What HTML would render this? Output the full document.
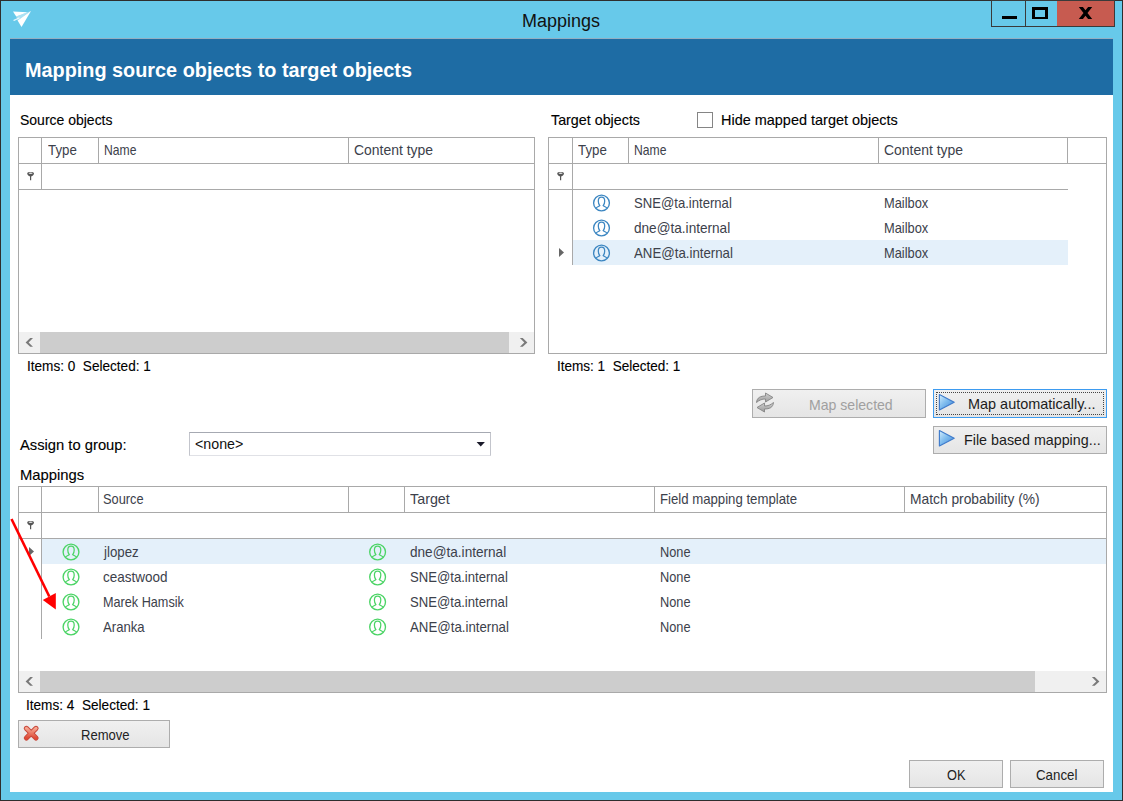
<!DOCTYPE html>
<html><head><meta charset="utf-8"><title>Mappings</title>
<style>
html,body{margin:0;padding:0;width:1123px;height:801px;overflow:hidden;background:#2E2E2E}
body{position:relative;font-family:"Liberation Sans",sans-serif}
.t{position:absolute;white-space:pre;line-height:20px;transform-origin:0 0}
svg{overflow:visible}
</style></head><body>
<div style="position:absolute;left:0px;top:0px;width:1123px;height:801px;background:#2E2E2E"></div>
<div style="position:absolute;left:1px;top:1px;width:1121px;height:799px;background:#67C9EA"></div>
<div style="position:absolute;left:10px;top:38px;width:1103px;height:754px;background:#FFFFFF"></div>
<div style="position:absolute;left:10px;top:38px;width:1103px;height:1px;background:#93AFC3"></div>
<div style="position:absolute;left:10px;top:39px;width:1103px;height:56px;background:#1E6CA4"></div>
<svg style="position:absolute;left:0;top:0" width="60" height="40"><polygon points="13,11.5 27.5,12.2 16.2,16.6" fill="#fff"/><polygon points="17.6,20.4 31,11 21.5,27" fill="#fff"/><polygon points="16.2,16.6 27.5,12.2 31,11 17.6,20.4" fill="#fff" fill-opacity="0.45"/><line x1="14" y1="20.3" x2="19" y2="18" stroke="#fff" stroke-opacity="0.8" stroke-width="1.3" stroke-linecap="round"/></svg>
<div class="t" style="left:522.00px;top:11px;font-size:18px;color:#111;transform:scaleX(0.9994);">Mappings</div>
<div style="position:absolute;left:991px;top:0px;width:124px;height:27px;background:#3A3A3A"></div>
<div style="position:absolute;left:992px;top:1px;width:33px;height:25px;background:#67C9EA"></div>
<div style="position:absolute;left:1026px;top:1px;width:31px;height:25px;background:#67C9EA"></div>
<div style="position:absolute;left:1057px;top:1px;width:57px;height:25px;background:#C75B50"></div>
<div style="position:absolute;left:1002px;top:16px;width:15px;height:3px;background:#000"></div>
<div style="position:absolute;left:1032px;top:7px;width:16px;height:12px;border:3px solid #000;border-left-width:3px;box-sizing:border-box;border-bottom-width:2px;border-right-width:3px"></div>
<svg style="position:absolute;left:1075px;top:4px" width="22" height="18"><polygon points="3.8,3 7.9,3 10.5,6.2 13.1,3 17.2,3 12.5,9 17.2,15 13.1,15 10.5,11.8 7.9,15 3.8,15 8.5,9" fill="#000"/></svg>
<div class="t" style="left:25.00px;top:60px;font-size:20px;font-weight:bold;color:#FFFFFF;transform:scaleX(0.9922);">Mapping source objects to target objects</div>
<div class="t" style="left:20.40px;top:110px;font-size:14.5px;color:#000;transform:scaleX(0.9644);-webkit-text-stroke:0.12px #000;">Source objects</div>
<div style="position:absolute;left:18px;top:137px;width:517px;height:217px;border:1px solid #A9A9A9;box-sizing:border-box;background:#fff"></div>
<div style="position:absolute;left:19px;top:163px;width:515px;height:1px;background:#A9A9A9"></div>
<div style="position:absolute;left:19px;top:189px;width:515px;height:1px;background:#A9A9A9"></div>
<div style="position:absolute;left:41px;top:138px;width:1px;height:51px;background:#A9A9A9"></div>
<div style="position:absolute;left:98px;top:138px;width:1px;height:25px;background:#A9A9A9"></div>
<div style="position:absolute;left:348px;top:138px;width:1px;height:25px;background:#A9A9A9"></div>
<div class="t" style="left:47.50px;top:140px;font-size:14.5px;color:#3C414B;transform:scaleX(0.9161);">Type</div>
<div class="t" style="left:103.80px;top:140px;font-size:14.5px;color:#3C414B;transform:scaleX(0.8375);">Name</div>
<div class="t" style="left:353.60px;top:140px;font-size:14.5px;color:#3C414B;transform:scaleX(0.9609);">Content type</div>
<svg style="position:absolute;left:26px;top:171px" width="10" height="11"><path d="M1.2,2.5 C1.2,0.6 8,0.6 8,2.5 C8,4 6.2,5 5.2,5.6 L5.2,9.2 L4,9.2 L4,5.6 C3,5 1.2,4 1.2,2.5 Z" fill="#555"/><ellipse cx="4.6" cy="2.2" rx="2" ry="0.8" fill="#E0E0E0"/></svg>
<div style="position:absolute;left:19px;top:332px;width:515px;height:21px;background:#F0F0F0"></div>
<div style="position:absolute;left:40px;top:332px;width:469px;height:21px;background:#CDCDCD"></div>
<svg style="position:absolute;left:25px;top:338px" width="10" height="10"><polygon points="8,0 5.2,0 0.6,4.4 5.2,8.8 8,8.8 3.6,4.4" fill="#7A7A7A"/></svg>
<svg style="position:absolute;left:518px;top:338px" width="10" height="10"><polygon points="1.9,0 4.7,0 9.4,4.4 4.7,8.8 1.9,8.8 6.3,4.4" fill="#7A7A7A"/></svg>
<div class="t" style="left:26.70px;top:356px;font-size:14.5px;color:#000;transform:scaleX(0.9366);-webkit-text-stroke:0.12px #000;">Items: 0  Selected: 1</div>
<div class="t" style="left:551.40px;top:110px;font-size:14.5px;color:#000;transform:scaleX(0.9859);-webkit-text-stroke:0.12px #000;">Target objects</div>
<div style="position:absolute;left:697px;top:112px;width:16px;height:16px;border:1px solid #858585;box-sizing:border-box;background:#fff"></div>
<div class="t" style="left:721.40px;top:110px;font-size:14.5px;color:#000;transform:scaleX(0.9970);-webkit-text-stroke:0.12px #000;">Hide mapped target objects</div>
<div style="position:absolute;left:548px;top:137px;width:559px;height:217px;border:1px solid #A9A9A9;box-sizing:border-box;background:#fff"></div>
<div style="position:absolute;left:549px;top:163px;width:557px;height:1px;background:#A9A9A9"></div>
<div style="position:absolute;left:549px;top:189px;width:519px;height:1px;background:#A9A9A9"></div>
<div style="position:absolute;left:572px;top:138px;width:1px;height:127px;background:#A9A9A9"></div>
<div style="position:absolute;left:628px;top:138px;width:1px;height:25px;background:#A9A9A9"></div>
<div style="position:absolute;left:878px;top:138px;width:1px;height:25px;background:#A9A9A9"></div>
<div style="position:absolute;left:1067px;top:138px;width:1px;height:25px;background:#A9A9A9"></div>
<div class="t" style="left:577.60px;top:140px;font-size:14.5px;color:#3C414B;transform:scaleX(0.9161);">Type</div>
<div class="t" style="left:633.80px;top:140px;font-size:14.5px;color:#3C414B;transform:scaleX(0.8375);">Name</div>
<div class="t" style="left:883.60px;top:140px;font-size:14.5px;color:#3C414B;transform:scaleX(0.9609);">Content type</div>
<svg style="position:absolute;left:556px;top:171px" width="10" height="11"><path d="M1.2,2.5 C1.2,0.6 8,0.6 8,2.5 C8,4 6.2,5 5.2,5.6 L5.2,9.2 L4,9.2 L4,5.6 C3,5 1.2,4 1.2,2.5 Z" fill="#555"/><ellipse cx="4.6" cy="2.2" rx="2" ry="0.8" fill="#E0E0E0"/></svg>
<div style="position:absolute;left:573px;top:240px;width:495px;height:25px;background:#E4F0FA"></div>
<svg style="position:absolute;left:558px;top:247px" width="8" height="12"><polygon points="1,1 6,5.5 1,10" fill="#666"/></svg>
<svg style="position:absolute;left:592px;top:194px" width="18" height="18"><g transform="translate(0.50,0.00)"><circle cx="9" cy="9" r="7.9" fill="none" stroke="#3D87C2" stroke-width="1.35"/><path d="M3.4,14.2 C4.6,12.8 6.6,12.4 7.3,11.6 C6.3,10.6 5.8,9.2 5.8,7.0 C5.8,4.7 7.2,3.2 9,3.2 C10.8,3.2 12.2,4.7 12.2,7.0 C12.2,9.2 11.7,10.6 10.7,11.6 C11.4,12.4 13.4,12.8 14.6,14.2" fill="none" stroke="#3D87C2" stroke-width="1.25"/></g></svg>
<div class="t" style="left:634.10px;top:193px;font-size:14.5px;color:#3C414B;transform:scaleX(0.9038);">SNE@ta.internal</div>
<div class="t" style="left:883.90px;top:193px;font-size:14.5px;color:#3C414B;transform:scaleX(0.8866);">Mailbox</div>
<svg style="position:absolute;left:592px;top:219px" width="18" height="18"><g transform="translate(0.50,0.00)"><circle cx="9" cy="9" r="7.9" fill="none" stroke="#3D87C2" stroke-width="1.35"/><path d="M3.4,14.2 C4.6,12.8 6.6,12.4 7.3,11.6 C6.3,10.6 5.8,9.2 5.8,7.0 C5.8,4.7 7.2,3.2 9,3.2 C10.8,3.2 12.2,4.7 12.2,7.0 C12.2,9.2 11.7,10.6 10.7,11.6 C11.4,12.4 13.4,12.8 14.6,14.2" fill="none" stroke="#3D87C2" stroke-width="1.25"/></g></svg>
<div class="t" style="left:634.10px;top:218px;font-size:14.5px;color:#3C414B;transform:scaleX(0.9377);">dne@ta.internal</div>
<div class="t" style="left:883.90px;top:218px;font-size:14.5px;color:#3C414B;transform:scaleX(0.8866);">Mailbox</div>
<svg style="position:absolute;left:592px;top:244px" width="18" height="18"><g transform="translate(0.50,0.00)"><circle cx="9" cy="9" r="7.9" fill="none" stroke="#3D87C2" stroke-width="1.35"/><path d="M3.4,14.2 C4.6,12.8 6.6,12.4 7.3,11.6 C6.3,10.6 5.8,9.2 5.8,7.0 C5.8,4.7 7.2,3.2 9,3.2 C10.8,3.2 12.2,4.7 12.2,7.0 C12.2,9.2 11.7,10.6 10.7,11.6 C11.4,12.4 13.4,12.8 14.6,14.2" fill="none" stroke="#3D87C2" stroke-width="1.25"/></g></svg>
<div class="t" style="left:634.10px;top:243px;font-size:14.5px;color:#3C414B;transform:scaleX(0.9139);">ANE@ta.internal</div>
<div class="t" style="left:883.90px;top:243px;font-size:14.5px;color:#3C414B;transform:scaleX(0.8866);">Mailbox</div>
<div class="t" style="left:557.20px;top:356px;font-size:14.5px;color:#000;transform:scaleX(0.9336);-webkit-text-stroke:0.12px #000;">Items: 1  Selected: 1</div>
<div style="position:absolute;left:752px;top:389px;width:174px;height:29px;border:1px solid #ADADAD;box-sizing:border-box;background:linear-gradient(#F0F0F0,#E5E5E5)"></div>
<svg style="position:absolute;left:750px;top:388px" width="30" height="30"><defs><linearGradient id="rg" x1="0" y1="0" x2="0" y2="1"><stop offset="0" stop-color="#D0D0D0"/><stop offset="1" stop-color="#9A9A9A"/></linearGradient></defs>
<path d="M6.5,14.5 C7,9.5 10.5,8 15.5,8 L15.5,5 L23,9.5 L15.5,14 L15.5,11 C12,11 9.5,12 6.5,14.5 Z" fill="url(#rg)" stroke="#858585" stroke-width="0.9" stroke-linejoin="round"/>
<path d="M23.5,14.5 C23,19.5 19.5,21 14.5,21 L14.5,24 L7,19.5 L14.5,15 L14.5,18 C18,18 20.5,17 23.5,14.5 Z" fill="url(#rg)" stroke="#858585" stroke-width="0.9" stroke-linejoin="round"/></svg>
<div class="t" style="left:808.60px;top:395px;font-size:14.5px;color:#A0A0A0;transform:scaleX(0.9705);">Map selected</div>
<div style="position:absolute;left:933px;top:389px;width:174px;height:29px;border:1px solid #3D9BF0;box-sizing:border-box;background:linear-gradient(#F0F0F0,#E5E5E5)"></div>
<div style="position:absolute;left:936px;top:392px;width:168px;height:23px;border:1px dotted #444;box-sizing:border-box"></div>
<svg style="position:absolute;left:937px;top:393px" width="20" height="20"><defs><linearGradient id="pg1" x1="0" y1="0" x2="1" y2="1"><stop offset="0" stop-color="#D4EEFD"/><stop offset="0.45" stop-color="#80BDEE"/><stop offset="1" stop-color="#3E85D8"/></linearGradient></defs><polygon points="2.4,1.6 17.2,9.3 2.4,17" fill="url(#pg1)" stroke="#3F7BCB" stroke-width="1.15" stroke-linejoin="round"/></svg>
<div class="t" style="left:967.50px;top:394px;font-size:14.5px;color:#1C1C1C;transform:scaleX(0.9964);">Map automatically...</div>
<div style="position:absolute;left:933px;top:426px;width:174px;height:28px;border:1px solid #ADADAD;box-sizing:border-box;background:linear-gradient(#F0F0F0,#E5E5E5)"></div>
<svg style="position:absolute;left:937px;top:429px" width="20" height="20"><defs><linearGradient id="pg2" x1="0" y1="0" x2="1" y2="1"><stop offset="0" stop-color="#D4EEFD"/><stop offset="0.45" stop-color="#80BDEE"/><stop offset="1" stop-color="#3E85D8"/></linearGradient></defs><polygon points="2.4,1.6 17.2,9.3 2.4,17" fill="url(#pg2)" stroke="#3F7BCB" stroke-width="1.15" stroke-linejoin="round"/></svg>
<div class="t" style="left:963.60px;top:430px;font-size:14.5px;color:#1C1C1C;transform:scaleX(0.9853);">File based mapping...</div>
<div class="t" style="left:20.10px;top:435px;font-size:14.5px;color:#000;transform:scaleX(1.0173);-webkit-text-stroke:0.12px #000;">Assign to group:</div>
<div style="position:absolute;left:189px;top:432px;width:302px;height:24px;border:1px solid #C3C5CC;border-top-color:#A6A9B2;border-bottom-color:#E0E1E6;box-sizing:border-box;background:#fff"></div>
<div class="t" style="left:194.70px;top:434px;font-size:14.5px;color:#111;transform:scaleX(0.9817);">&lt;none&gt;</div>
<svg style="position:absolute;left:476px;top:441px" width="10" height="7"><polygon points="0.6,1 8.9,1 4.75,5.6" fill="#1A1A2A"/></svg>
<div class="t" style="left:20.30px;top:465px;font-size:14.5px;color:#000;transform:scaleX(1.0211);-webkit-text-stroke:0.12px #000;">Mappings</div>
<div style="position:absolute;left:18px;top:486px;width:1089px;height:207px;border:1px solid #A9A9A9;box-sizing:border-box;background:#fff"></div>
<div style="position:absolute;left:19px;top:512px;width:1087px;height:1px;background:#A9A9A9"></div>
<div style="position:absolute;left:19px;top:538px;width:1087px;height:1px;background:#A9A9A9"></div>
<div style="position:absolute;left:41px;top:487px;width:1px;height:152px;background:#A9A9A9"></div>
<div style="position:absolute;left:98px;top:487px;width:1px;height:25px;background:#A9A9A9"></div>
<div style="position:absolute;left:348px;top:487px;width:1px;height:25px;background:#A9A9A9"></div>
<div style="position:absolute;left:404px;top:487px;width:1px;height:25px;background:#A9A9A9"></div>
<div style="position:absolute;left:654px;top:487px;width:1px;height:25px;background:#A9A9A9"></div>
<div style="position:absolute;left:904px;top:487px;width:1px;height:25px;background:#A9A9A9"></div>
<div class="t" style="left:103.30px;top:489px;font-size:14.5px;color:#3C414B;transform:scaleX(0.8838);">Source</div>
<div class="t" style="left:410.10px;top:489px;font-size:14.5px;color:#3C414B;transform:scaleX(0.9877);">Target</div>
<div class="t" style="left:659.70px;top:489px;font-size:14.5px;color:#3C414B;transform:scaleX(0.9089);">Field mapping template</div>
<div class="t" style="left:909.90px;top:489px;font-size:14.5px;color:#3C414B;transform:scaleX(0.9517);">Match probability (%)</div>
<svg style="position:absolute;left:26px;top:520px" width="10" height="11"><path d="M1.2,2.5 C1.2,0.6 8,0.6 8,2.5 C8,4 6.2,5 5.2,5.6 L5.2,9.2 L4,9.2 L4,5.6 C3,5 1.2,4 1.2,2.5 Z" fill="#555"/><ellipse cx="4.6" cy="2.2" rx="2" ry="0.8" fill="#E0E0E0"/></svg>
<div style="position:absolute;left:42px;top:539px;width:1064px;height:25px;background:#E4F0FA"></div>
<svg style="position:absolute;left:28px;top:546px" width="8" height="12"><polygon points="1,1 6,5.5 1,10" fill="#666"/></svg>
<svg style="position:absolute;left:62px;top:543px" width="18" height="18"><g transform="translate(0.00,0.00)"><circle cx="9" cy="9" r="7.9" fill="none" stroke="#4BD465" stroke-width="1.35"/><path d="M3.4,14.2 C4.6,12.8 6.6,12.4 7.3,11.6 C6.3,10.6 5.8,9.2 5.8,7.0 C5.8,4.7 7.2,3.2 9,3.2 C10.8,3.2 12.2,4.7 12.2,7.0 C12.2,9.2 11.7,10.6 10.7,11.6 C11.4,12.4 13.4,12.8 14.6,14.2" fill="none" stroke="#4BD465" stroke-width="1.25"/></g></svg>
<div class="t" style="left:103.63px;top:542px;font-size:14.5px;color:#3C414B;transform:scaleX(0.9150);">jlopez</div>
<svg style="position:absolute;left:368px;top:543px" width="18" height="18"><g transform="translate(0.60,0.00)"><circle cx="9" cy="9" r="7.9" fill="none" stroke="#4BD465" stroke-width="1.35"/><path d="M3.4,14.2 C4.6,12.8 6.6,12.4 7.3,11.6 C6.3,10.6 5.8,9.2 5.8,7.0 C5.8,4.7 7.2,3.2 9,3.2 C10.8,3.2 12.2,4.7 12.2,7.0 C12.2,9.2 11.7,10.6 10.7,11.6 C11.4,12.4 13.4,12.8 14.6,14.2" fill="none" stroke="#4BD465" stroke-width="1.25"/></g></svg>
<div class="t" style="left:410.00px;top:542px;font-size:14.5px;color:#3C414B;transform:scaleX(0.9377);">dne@ta.internal</div>
<div class="t" style="left:660.00px;top:542px;font-size:14.5px;color:#3C414B;transform:scaleX(0.8797);">None</div>
<svg style="position:absolute;left:62px;top:568px" width="18" height="18"><g transform="translate(0.00,0.00)"><circle cx="9" cy="9" r="7.9" fill="none" stroke="#4BD465" stroke-width="1.35"/><path d="M3.4,14.2 C4.6,12.8 6.6,12.4 7.3,11.6 C6.3,10.6 5.8,9.2 5.8,7.0 C5.8,4.7 7.2,3.2 9,3.2 C10.8,3.2 12.2,4.7 12.2,7.0 C12.2,9.2 11.7,10.6 10.7,11.6 C11.4,12.4 13.4,12.8 14.6,14.2" fill="none" stroke="#4BD465" stroke-width="1.25"/></g></svg>
<div class="t" style="left:103.30px;top:567px;font-size:14.5px;color:#3C414B;transform:scaleX(0.9318);">ceastwood</div>
<svg style="position:absolute;left:368px;top:568px" width="18" height="18"><g transform="translate(0.60,0.00)"><circle cx="9" cy="9" r="7.9" fill="none" stroke="#4BD465" stroke-width="1.35"/><path d="M3.4,14.2 C4.6,12.8 6.6,12.4 7.3,11.6 C6.3,10.6 5.8,9.2 5.8,7.0 C5.8,4.7 7.2,3.2 9,3.2 C10.8,3.2 12.2,4.7 12.2,7.0 C12.2,9.2 11.7,10.6 10.7,11.6 C11.4,12.4 13.4,12.8 14.6,14.2" fill="none" stroke="#4BD465" stroke-width="1.25"/></g></svg>
<div class="t" style="left:410.00px;top:567px;font-size:14.5px;color:#3C414B;transform:scaleX(0.9038);">SNE@ta.internal</div>
<div class="t" style="left:660.00px;top:567px;font-size:14.5px;color:#3C414B;transform:scaleX(0.8797);">None</div>
<svg style="position:absolute;left:62px;top:593px" width="18" height="18"><g transform="translate(0.00,0.00)"><circle cx="9" cy="9" r="7.9" fill="none" stroke="#4BD465" stroke-width="1.35"/><path d="M3.4,14.2 C4.6,12.8 6.6,12.4 7.3,11.6 C6.3,10.6 5.8,9.2 5.8,7.0 C5.8,4.7 7.2,3.2 9,3.2 C10.8,3.2 12.2,4.7 12.2,7.0 C12.2,9.2 11.7,10.6 10.7,11.6 C11.4,12.4 13.4,12.8 14.6,14.2" fill="none" stroke="#4BD465" stroke-width="1.25"/></g></svg>
<div class="t" style="left:103.30px;top:592px;font-size:14.5px;color:#3C414B;transform:scaleX(0.8729);">Marek Hamsik</div>
<svg style="position:absolute;left:368px;top:593px" width="18" height="18"><g transform="translate(0.60,0.00)"><circle cx="9" cy="9" r="7.9" fill="none" stroke="#4BD465" stroke-width="1.35"/><path d="M3.4,14.2 C4.6,12.8 6.6,12.4 7.3,11.6 C6.3,10.6 5.8,9.2 5.8,7.0 C5.8,4.7 7.2,3.2 9,3.2 C10.8,3.2 12.2,4.7 12.2,7.0 C12.2,9.2 11.7,10.6 10.7,11.6 C11.4,12.4 13.4,12.8 14.6,14.2" fill="none" stroke="#4BD465" stroke-width="1.25"/></g></svg>
<div class="t" style="left:410.00px;top:592px;font-size:14.5px;color:#3C414B;transform:scaleX(0.9038);">SNE@ta.internal</div>
<div class="t" style="left:660.00px;top:592px;font-size:14.5px;color:#3C414B;transform:scaleX(0.8797);">None</div>
<svg style="position:absolute;left:62px;top:618px" width="18" height="18"><g transform="translate(0.00,0.00)"><circle cx="9" cy="9" r="7.9" fill="none" stroke="#4BD465" stroke-width="1.35"/><path d="M3.4,14.2 C4.6,12.8 6.6,12.4 7.3,11.6 C6.3,10.6 5.8,9.2 5.8,7.0 C5.8,4.7 7.2,3.2 9,3.2 C10.8,3.2 12.2,4.7 12.2,7.0 C12.2,9.2 11.7,10.6 10.7,11.6 C11.4,12.4 13.4,12.8 14.6,14.2" fill="none" stroke="#4BD465" stroke-width="1.25"/></g></svg>
<div class="t" style="left:103.30px;top:617px;font-size:14.5px;color:#3C414B;transform:scaleX(0.9053);">Aranka</div>
<svg style="position:absolute;left:368px;top:618px" width="18" height="18"><g transform="translate(0.60,0.00)"><circle cx="9" cy="9" r="7.9" fill="none" stroke="#4BD465" stroke-width="1.35"/><path d="M3.4,14.2 C4.6,12.8 6.6,12.4 7.3,11.6 C6.3,10.6 5.8,9.2 5.8,7.0 C5.8,4.7 7.2,3.2 9,3.2 C10.8,3.2 12.2,4.7 12.2,7.0 C12.2,9.2 11.7,10.6 10.7,11.6 C11.4,12.4 13.4,12.8 14.6,14.2" fill="none" stroke="#4BD465" stroke-width="1.25"/></g></svg>
<div class="t" style="left:410.00px;top:617px;font-size:14.5px;color:#3C414B;transform:scaleX(0.9139);">ANE@ta.internal</div>
<div class="t" style="left:660.00px;top:617px;font-size:14.5px;color:#3C414B;transform:scaleX(0.8797);">None</div>
<div style="position:absolute;left:19px;top:671px;width:1087px;height:21px;background:#F0F0F0"></div>
<div style="position:absolute;left:40px;top:671px;width:995px;height:21px;background:#CDCDCD"></div>
<svg style="position:absolute;left:25px;top:677px" width="10" height="10"><polygon points="8,0 5.2,0 0.6,4.4 5.2,8.8 8,8.8 3.6,4.4" fill="#7A7A7A"/></svg>
<svg style="position:absolute;left:1090px;top:677px" width="10" height="10"><polygon points="1.9,0 4.7,0 9.4,4.4 4.7,8.8 1.9,8.8 6.3,4.4" fill="#7A7A7A"/></svg>
<div class="t" style="left:26.40px;top:695px;font-size:14.5px;color:#000;transform:scaleX(0.9381);-webkit-text-stroke:0.12px #000;">Items: 4  Selected: 1</div>
<div style="position:absolute;left:18px;top:720px;width:152px;height:28px;border:1px solid #ADADAD;box-sizing:border-box;background:linear-gradient(#F0F0F0,#E5E5E5)"></div>
<svg style="position:absolute;left:21px;top:723px" width="20" height="20"><defs><linearGradient id="xg" x1="0" y1="0" x2="0" y2="1"><stop offset="0" stop-color="#F6A58F"/><stop offset="1" stop-color="#DE4A36"/></linearGradient></defs><path d="M5.4,5.4 L15,15 M15,5.4 L5.4,15" stroke="#C8473A" stroke-width="5.2" stroke-linecap="round"/><path d="M5.4,5.4 L15,15 M15,5.4 L5.4,15" stroke="url(#xg)" stroke-width="3.2" stroke-linecap="round"/></svg>
<div class="t" style="left:80.70px;top:725px;font-size:14.5px;color:#222;transform:scaleX(0.9000);">Remove</div>
<div style="position:absolute;left:909px;top:760px;width:94px;height:28px;border:1px solid #ADADAD;box-sizing:border-box;background:linear-gradient(#F0F0F0,#E5E5E5)"></div>
<div class="t" style="left:947.00px;top:765px;font-size:14.5px;color:#222;transform:scaleX(0.8829);">OK</div>
<div style="position:absolute;left:1010px;top:760px;width:94px;height:28px;border:1px solid #ADADAD;box-sizing:border-box;background:linear-gradient(#F0F0F0,#E5E5E5)"></div>
<div class="t" style="left:1036.20px;top:765px;font-size:14.5px;color:#222;transform:scaleX(0.9172);">Cancel</div>
<svg style="position:absolute;left:0;top:500px" width="80" height="130"><line x1="11.5" y1="19" x2="49.3" y2="96.5" stroke="#FF0000" stroke-width="2.6"/><polygon points="42.8,100 55.8,93 55.8,109.5" fill="#FF0000"/></svg>
</body></html>
